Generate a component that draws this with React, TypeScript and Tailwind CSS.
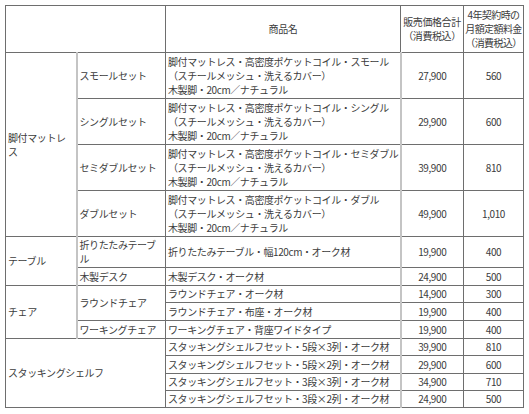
type Row = {
  cat?: { label: string[]; rowSpan: number; colSpan?: number };
  set?: { label: string[]; rowSpan: number };
  name: string[];
  price: string;
  monthly: string;
  h: string;
};

const mattress = (size: string) => [
  `脚付マットレス・高密度ポケットコイル・${size}`,
  '（スチールメッシュ・洗えるカバー）',
  '木製脚・20cm／ナチュラル',
];

const rows: Row[] = [
  {
    cat: { label: ['脚付マットレ', 'ス'], rowSpan: 4 },
    set: { label: ['スモールセット'], rowSpan: 1 },
    name: mattress('スモール'),
    price: '27,900',
    monthly: '560',
    h: 'h-[46px]',
  },
  { set: { label: ['シングルセット'], rowSpan: 1 }, name: mattress('シングル'), price: '29,900', monthly: '600', h: 'h-[46px]' },
  { set: { label: ['セミダブルセット'], rowSpan: 1 }, name: mattress('セミダブル'), price: '39,900', monthly: '810', h: 'h-[46px]' },
  { set: { label: ['ダブルセット'], rowSpan: 1 }, name: mattress('ダブル'), price: '49,900', monthly: '1,010', h: 'h-[46px]' },
  {
    cat: { label: ['テーブル'], rowSpan: 2 },
    set: { label: ['折りたたみテーブ', 'ル'], rowSpan: 1 },
    name: ['折りたたみテーブル・幅120cm・オーク材'],
    price: '19,900',
    monthly: '400',
    h: 'h-[31px]',
  },
  { set: { label: ['木製デスク'], rowSpan: 1 }, name: ['木製デスク・オーク材'], price: '24,900', monthly: '500', h: 'h-[18px]' },
  {
    cat: { label: ['チェア'], rowSpan: 3 },
    set: { label: ['ラウンドチェア'], rowSpan: 2 },
    name: ['ラウンドチェア・オーク材'],
    price: '14,900',
    monthly: '300',
    h: 'h-[17px]',
  },
  { name: ['ラウンドチェア・布座・オーク材'], price: '19,900', monthly: '400', h: 'h-[18px]' },
  { set: { label: ['ワーキングチェア'], rowSpan: 1 }, name: ['ワーキングチェア・背座ワイドタイプ'], price: '19,900', monthly: '400', h: 'h-[18px]' },
  {
    cat: { label: ['スタッキングシェルフ'], rowSpan: 4, colSpan: 2 },
    name: ['スタッキングシェルフセット・5段×3列・オーク材'],
    price: '39,900',
    monthly: '810',
    h: 'h-[17px]',
  },
  { name: ['スタッキングシェルフセット・5段×2列・オーク材'], price: '29,900', monthly: '600', h: 'h-[18px]' },
  { name: ['スタッキングシェルフセット・3段×3列・オーク材'], price: '34,900', monthly: '710', h: 'h-[17px]' },
  { name: ['スタッキングシェルフセット・3段×2列・オーク材'], price: '24,900', monthly: '500', h: 'h-[17px]' },
];

function Lines({ lines }: { lines: string[] }) {
  return (
    <>
      {lines.map((l, i) => (
        <span key={i} className="block whitespace-nowrap">
          {l}
        </span>
      ))}
    </>
  );
}

const head = 'border border-[#6e6e6e] text-center font-normal align-middle';

export default function App() {
  return (
    <div className="w-[529px] h-[414px] bg-white pt-[5px] pl-[5px] font-['Noto_Sans_CJK_JP',sans-serif] text-[10px] leading-[14px] tracking-[-0.4px] text-[#3c3c3c]">
      <table className="w-[518px] table-fixed border-collapse border border-[#5a5a5a]">
        <colgroup>
          <col className="w-[71px]" />
          <col className="w-[89px]" />
          <col className="w-[235px]" />
          <col className="w-[63px]" />
          <col className="w-[60px]" />
        </colgroup>
        <thead>
          <tr className="h-[47px]">
            <th colSpan={2} className="border border-[#6e6e6e]" />
            <th className={head}>商品名</th>
            <th className={head}>
              <Lines lines={['販売価格合計', '（消費税込）']} />
            </th>
            <th className={`${head} tracking-[-0.6px]`}>
              <Lines lines={['4年契約時の', '月額定額料金', '（消費税込）']} />
            </th>
          </tr>
        </thead>
        <tbody>
          {rows.map((r, i) => (
            <tr key={i} className={r.h}>
              {r.cat && (
                <td
                  rowSpan={r.cat.rowSpan}
                  colSpan={r.cat.colSpan}
                  className={
                    r.cat.colSpan
                      ? 'border border-[#6e6e6e] px-[2px] align-middle'
                      : 'border border-[#6e6e6e] border-r-2 border-r-[#c4c4c4] px-[2px] align-middle'
                  }
                >
                  <Lines lines={r.cat.label} />
                </td>
              )}
              {r.set && (
                <td rowSpan={r.set.rowSpan} className="border border-[#6e6e6e] border-l-2 border-l-[#c4c4c4] px-[2px] align-middle">
                  <Lines lines={r.set.label} />
                </td>
              )}
              <td className="border border-[#6e6e6e] border-r-2 border-r-[#c4c4c4] px-[2px] py-0 align-middle">
                <Lines lines={r.name} />
              </td>
              <td className="border border-[#6e6e6e] border-l-2 border-l-[#c4c4c4] text-center align-middle">{r.price}</td>
              <td className="border border-[#6e6e6e] text-center align-middle">{r.monthly}</td>
            </tr>
          ))}
        </tbody>
      </table>
    </div>
  );
}
